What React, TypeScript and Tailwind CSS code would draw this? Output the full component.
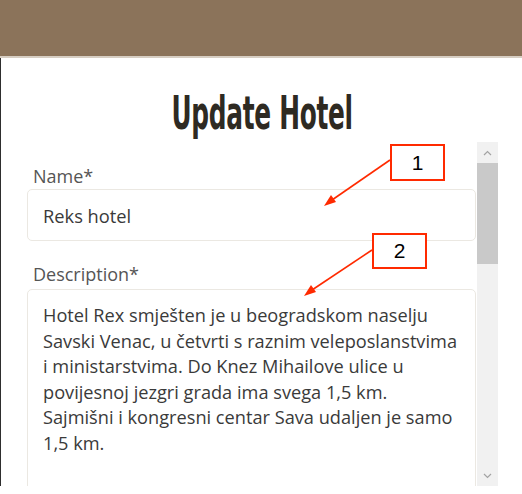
import React from 'react';

const description = `Hotel Rex smješten je u beogradskom naselju
Savski Venac, u četvrti s raznim veleposlanstvima
i ministarstvima. Do Knez Mihailove ulice u
povijesnoj jezgri grada ima svega 1,5 km.
Sajmišni i kongresni centar Sava udaljen je samo
1,5 km.

Osoblje hotela dostupno je 24 sata dnevno i rado
će vam pomoći.`;

function Scrollbar() {
  return (
    <div className="w-[21px] h-full bg-[#f1f1f1] flex flex-col items-center">
      <div className="h-[21px] w-full flex items-center justify-center">
        <svg width="9" height="6" viewBox="0 0 9 6">
          <path d="M1 5 L4.5 1.5 L8 5" fill="none" stroke="#a3a3a3" strokeWidth="1.2" />
        </svg>
      </div>
      <div className="h-[101px] w-full bg-[#c9c9c9]" />
      <div className="flex-1" />
      <div className="h-[21px] w-full flex items-center justify-center">
        <svg width="9" height="6" viewBox="0 0 9 6">
          <path d="M1 1 L4.5 4.5 L8 1" fill="none" stroke="#a3a3a3" strokeWidth="1.2" />
        </svg>
      </div>
    </div>
  );
}

export default function App() {
  return (
    <div className="relative w-[522px] h-[494px] bg-white overflow-hidden font-['Open_Sans',sans-serif]">
      {/* header bar */}
      <div className="h-[58px] bg-[#8b735a] border-b-2 border-[#d7cec3]" />

      <div className="w-[498px] h-[428px] border-l border-[#2e2e2e] flex flex-col">
        <div className="h-[84px] flex items-center justify-center pt-[26px] pl-[26px]">
          <h1 className="font-['DejaVu_Sans_Condensed',sans-serif] font-bold text-[46px] leading-none text-[#2e2a22] scale-x-[0.6] tracking-[-0.5px]">
            Update Hotel
          </h1>
        </div>

        <div className="flex flex-1 min-h-0">
          <div className="flex-1 pl-[26px] pr-px pt-[22px] overflow-hidden">
            <label className="block pl-[6px] text-[18px] leading-[25px] text-[#555]">Name*</label>
            <input
              defaultValue="Reks hotel"
              className="w-full h-[52px] border border-[#ebe8e2] rounded-[5px] px-[15px] text-[18.3px] text-[#3a3a3a] outline-none"
            />
            <label className="block pl-[6px] mt-[21px] mb-[2px] text-[18px] leading-[25px] text-[#555]">Description*</label>
            <textarea
              defaultValue={description}
              wrap="off"
              className="block w-full h-[260px] border border-[#ebe8e2] rounded-[5px] pl-[15px] pr-[4px] pt-[13px] text-[18.2px] leading-[25.5px] text-[#3a3a3a] resize-none outline-none overflow-hidden"
            />
          </div>
          <Scrollbar />
        </div>
      </div>

      {/* annotations */}
      <div className="absolute left-[390px] top-[144px] w-[55px] h-[37px] border-2 border-[#ff2a00] bg-white flex items-center justify-center font-['Liberation_Sans',sans-serif] text-[21px] text-black">
        1
      </div>
      <div className="absolute left-[372px] top-[233px] w-[55px] h-[36px] border-2 border-[#ff2a00] bg-white flex items-center justify-center font-['Liberation_Sans',sans-serif] text-[21px] text-black">
        2
      </div>
      <svg className="absolute left-0 top-0 pointer-events-none" width="522" height="494">
        <line x1="390" y1="160" x2="332" y2="200" stroke="#ff2a00" strokeWidth="1.6" />
        <polygon points="324,206 331,195 336,202" fill="#ff2a00" />
        <line x1="372" y1="250" x2="312" y2="290" stroke="#ff2a00" strokeWidth="1.6" />
        <polygon points="304,296 311,285 316,292" fill="#ff2a00" />
      </svg>
    </div>
  );
}
